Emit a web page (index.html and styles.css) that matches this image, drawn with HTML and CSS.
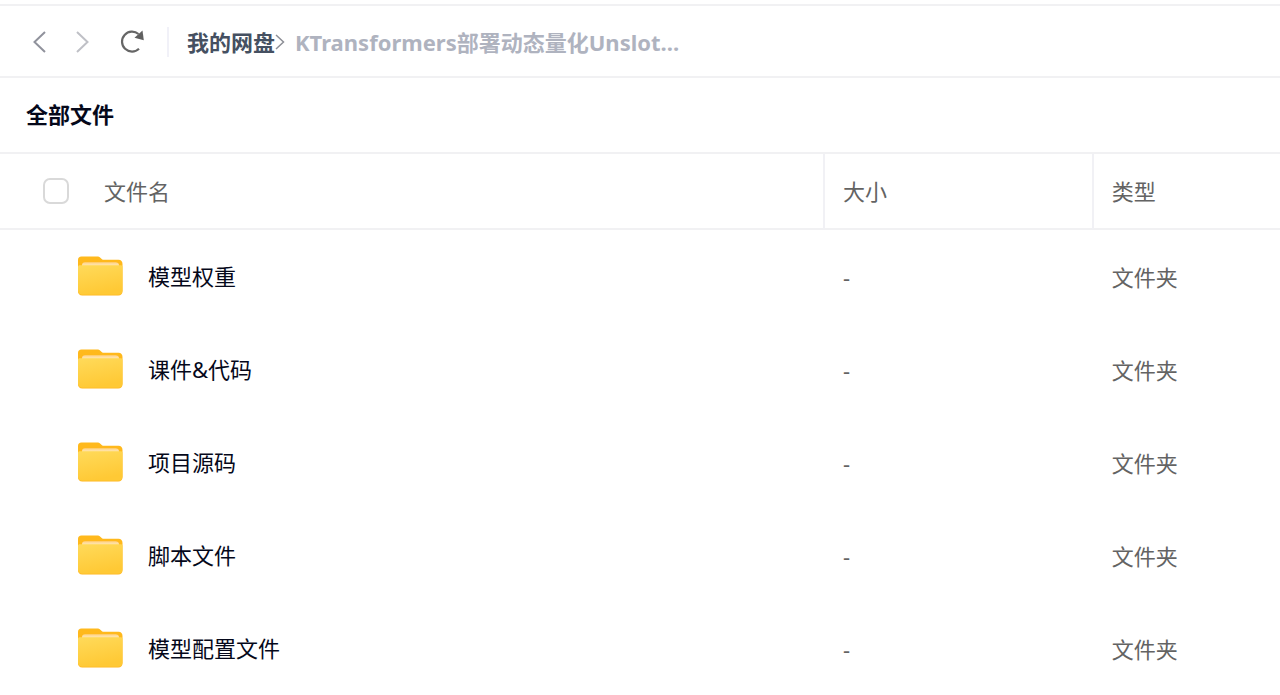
FILE: index.html
```html
<!DOCTYPE html>
<html lang="zh-CN">
<head>
<meta charset="utf-8">
<title>我的网盘</title>
<link rel="stylesheet" href="styles.css">
</head>
<body>
<svg class="defs" width="0" height="0" aria-hidden="true">
  <defs>
    <linearGradient id="back" x1="0" y1="0" x2="0" y2="1"><stop offset="0" stop-color="#ffb91c"/><stop offset="1" stop-color="#ffb51c"/></linearGradient>
    <linearGradient id="front" x1="0" y1="0" x2="0.3" y2="1"><stop offset="0" stop-color="#ffda5a"/><stop offset="1" stop-color="#ffc935"/></linearGradient>
    <linearGradient id="paper" x1="0" y1="0" x2="0" y2="1"><stop offset="0" stop-color="#ffd287"/><stop offset="1" stop-color="#fff0c4"/></linearGradient>
    <symbol id="folder" viewBox="0 0 46 40">
      <path fill="url(#back)" d="M4.500.5h15.500c1.500 0 2.500.4 3.600 1.400l1.400 1.300c.5.400 1 .6 1.800.6h14.700c2.600 0 4 1.700 4 4.200V35c0 2.800-1.500 4.500-4.300 4.500H5.300C2.500 39.500 1 37.800 1 35V4C1 1.800 2.200.5 4.500.5z"/>
      <path fill="url(#paper)" d="M5 11V9.500c0-2 1-3.200 3-3.200h30.500c2 0 3.500 1.200 3.500 3.200V11z"/>
      <path fill="url(#front)" d="M1 11c0-1.100.7-1.700 2-1.700h40.500c1.200 0 2 .6 2 1.700v23.500c0 2.700-1.600 4.200-4.300 4.200H5.300c-2.700 0-4.300-1.500-4.300-4.200z"/>
    </symbol>
  </defs>
</svg>
<header class="toolbar">
  <button class="nav-button" aria-label="后退"><svg width="28" height="28" viewBox="0 0 28 28"><path d="M19 4 8.500 14 19 24" fill="none" stroke="#90929c" stroke-width="2"/></svg></button>
  <button class="nav-button" aria-label="前进"><svg width="28" height="28" viewBox="0 0 28 28"><path d="m9 4 10.500 10L9 24" fill="none" stroke="#bfc0c6" stroke-width="2"/></svg></button>
  <button class="nav-button refresh" aria-label="刷新"><svg width="28" height="28" viewBox="0 0 28 28"><path d="M20.500 6A10 10 0 1 0 21 20.800" fill="none" stroke="#666" stroke-width="2.200"/><path d="M24.500 2.500 25.800 12.300 16.500 9.800z" fill="#606060"/></svg></button>
  <nav class="breadcrumb" aria-label="路径">
    <a class="root" href="#">我的网盘</a>
    <svg class="separator" width="10" height="18" viewBox="0 0 10 18"><path d="m1 2 7.500 7L1 16" fill="none" stroke="#8d8f96" stroke-width="1.500"/></svg>
    <span class="current">KTransformers部署动态量化Unslot...</span>
  </nav>
</header>
<h1 class="title">全部文件</h1>
<table class="files">
  <thead>
    <tr>
      <th class="name"><div class="select-all"><input type="checkbox" id="all" class="check"><label for="all">文件名</label></div></th>
      <th class="size">大小</th>
      <th class="type">类型</th>
    </tr>
  </thead>
  <tbody>
    <tr><td><div class="file"><svg class="folder"><use href="#folder"/></svg><span>模型权重</span></div></td><td>-</td><td>文件夹</td></tr>
    <tr><td><div class="file"><svg class="folder"><use href="#folder"/></svg><span>课件&amp;代码</span></div></td><td>-</td><td>文件夹</td></tr>
    <tr><td><div class="file"><svg class="folder"><use href="#folder"/></svg><span>项目源码</span></div></td><td>-</td><td>文件夹</td></tr>
    <tr><td><div class="file"><svg class="folder"><use href="#folder"/></svg><span>脚本文件</span></div></td><td>-</td><td>文件夹</td></tr>
    <tr><td><div class="file"><svg class="folder"><use href="#folder"/></svg><span>模型配置文件</span></div></td><td>-</td><td>文件夹</td></tr>
  </tbody>
</table>
</body>
</html>
```
FILE: styles.css
```css
* { box-sizing: border-box; }
body {
  margin: 0;
  padding-top: 4px;
  background: #fff;
  color: #05081a;
  font: 22px/32px "Noto Sans", "Noto Sans CJK SC", sans-serif;
}
.defs { position: absolute; }
svg { display: block; flex: none; }
.toolbar {
  display: flex;
  align-items: center;
  height: 74px;
  padding: 2px 26px 0;
  border-top: 2px solid #f1f1f3;
  border-bottom: 2px solid #f1f1f3;
}
.nav-button {
  margin: 0 14px 0 0;
  padding: 0;
  border: 0;
  background: none;
}
.refresh { margin: 0 21px 0 8px; }
.breadcrumb {
  display: flex;
  align-items: center;
  height: 30px;
  padding-left: 18px;
  border-left: 2px solid #f1f1f8;
  font-weight: 700;
  white-space: nowrap;
}
.root { color: #455061; text-decoration: none; }
.separator { margin-right: 10px; }
.current { color: #afb3bf; }
.title {
  margin: 0;
  padding: 20px 26px 22px;
  border-bottom: 2px solid #f1f1f3;
  font-size: 22px;
  line-height: 32px;
}
.files {
  width: 100%;
  table-layout: fixed;
  border-collapse: separate;
  border-spacing: 0;
}
th {
  height: 76px;
  padding: 0 18px;
  border-bottom: 2px solid #f1f1f3;
  color: #636363;
  font-weight: 400;
  text-align: left;
}
.size { width: 21%; }
.type { width: 14.700%; }
.size, .type { border-left: 2px solid #f1f1f5; }
.select-all { display: flex; align-items: center; padding-left: 25px; }
.check {
  appearance: none;
  width: 26px;
  height: 26px;
  margin: 0 35px 0 0;
  border: 2px solid #d9d9d9;
  border-radius: 7px;
  background: #fff;
}
td { height: 93px; padding: 0 20px; color: #636363; }
.file { display: flex; align-items: center; padding: 0 0 2px 57px; color: #05081a; }
.folder { width: 46px; height: 40px; margin-right: 25px; }
```
